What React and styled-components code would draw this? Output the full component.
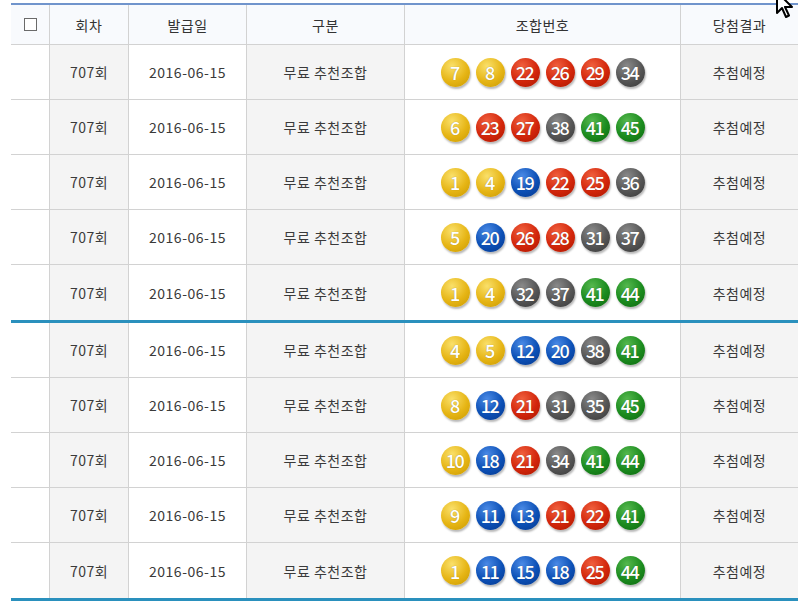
import React from "react";
import styled, { createGlobalStyle } from "styled-components";

const GlobalStyle = createGlobalStyle`
  html, body {
    margin: 0;
    padding: 0;
    background: #ffffff;
  }
  body {
    font-family: "Noto Sans CJK KR", "Noto Sans", sans-serif;
  }
`;

const COLS = "38px 79px 118px 158px 276px 118px";

const Page = styled.div`
  position: relative;
  width: 812px;
  height: 602px;
  overflow: hidden;
  padding: 3px 0 0 11px;
  box-sizing: border-box;
`;

const Table = styled.div`
  width: 787px;
  border-top: 2px solid #7094cc;
`;

const HeadRow = styled.div`
  display: grid;
  grid-template-columns: ${COLS};
  height: 40px;
  background: #f8fafd;
  border-bottom: 1px solid #d2d2d2;
  box-sizing: border-box;
`;

const HeadCell = styled.div`
  display: flex;
  align-items: center;
  justify-content: center;
  font-size: 14px;
  letter-spacing: 0.5px;
  color: #333;
  border-left: ${p => (p.first ? "none" : "1px solid #d2d2d2")};
`;

const CheckBox = styled.span`
  width: 11px;
  height: 11px;
  border: 1px solid #6a6a6a;
  background: #fff;
`;

const Group = styled.div`
  border-bottom: 3px solid #2a90bd;
`;

const Row = styled.div`
  display: grid;
  grid-template-columns: ${COLS};
  height: 55px;
  box-sizing: border-box;
  border-bottom: ${p => (p.last ? "none" : "1px solid #d2d2d2")};
`;

const Cell = styled.div`
  display: flex;
  align-items: center;
  justify-content: center;
  font-size: 14px;
  letter-spacing: 0.5px;
  color: #3a3a3a;
  background: ${p => (p.shade ? "#f4f4f4" : "#ffffff")};
  border-left: ${p => (p.first ? "none" : "1px solid #d2d2d2")};
`;

const Balls = styled.div`
  display: flex;
  gap: 6px;
`;

const BALL_COLORS = {
  yellow: ["#fae06a", "#e6b515", "#c89800"],
  blue: ["#4a8ae6", "#0c50b6", "#07378a"],
  red: ["#f0603e", "#d3260b", "#a81700"],
  gray: ["#8a8a8a", "#555555", "#363636"],
  green: ["#55b84e", "#1b8b1e", "#0d650f"],
};

const ballColor = n => {
  if (n <= 10) return "yellow";
  if (n <= 20) return "blue";
  if (n <= 30) return "red";
  if (n <= 40) return "gray";
  return "green";
};

const Ball = styled.span`
  width: 29px;
  height: 29px;
  border-radius: 50%;
  display: flex;
  align-items: center;
  justify-content: center;
  color: #fff;
  font-size: 18px;
  font-weight: 500;
  letter-spacing: -1.5px;
  text-indent: -1px;
  text-shadow: 0 0 1px rgba(0, 0, 0, 0.35);
  box-shadow: 1px 2px 2px rgba(0, 0, 0, 0.28);
  background: ${p => {
    const [a, b, c] = BALL_COLORS[p.tone];
    return `radial-gradient(circle at 38% 28%, ${a} 0%, ${b} 55%, ${c} 100%)`;
  }};
`;

const Cursor = styled.svg`
  position: absolute;
  left: 776px;
  top: -9px;
`;

const groups = [
  [
    [7, 8, 22, 26, 29, 34],
    [6, 23, 27, 38, 41, 45],
    [1, 4, 19, 22, 25, 36],
    [5, 20, 26, 28, 31, 37],
    [1, 4, 32, 37, 41, 44],
  ],
  [
    [4, 5, 12, 20, 38, 41],
    [8, 12, 21, 31, 35, 45],
    [10, 18, 21, 34, 41, 44],
    [9, 11, 13, 21, 22, 41],
    [1, 11, 15, 18, 25, 44],
  ],
];

export default function App() {
  return (
    <Page>
      <GlobalStyle />
      <Table>
        <HeadRow>
          <HeadCell first>
            <CheckBox />
          </HeadCell>
          <HeadCell>회차</HeadCell>
          <HeadCell>발급일</HeadCell>
          <HeadCell>구분</HeadCell>
          <HeadCell>조합번호</HeadCell>
          <HeadCell>당첨결과</HeadCell>
        </HeadRow>
        {groups.map((rows, gi) => (
          <Group key={gi}>
            {rows.map((nums, ri) => (
              <Row key={ri} last={ri === rows.length - 1}>
                <Cell first />
                <Cell shade>707회</Cell>
                <Cell>2016-06-15</Cell>
                <Cell shade>무료 추천조합</Cell>
                <Cell>
                  <Balls>
                    {nums.map(n => (
                      <Ball key={n} tone={ballColor(n)}>
                        {n}
                      </Ball>
                    ))}
                  </Balls>
                </Cell>
                <Cell shade>추첨예정</Cell>
              </Row>
            ))}
          </Group>
        ))}
      </Table>
      <Cursor width="20" height="30" viewBox="0 0 20 30">
        <path
          d="M1 1 L1 22 L6 17 L10 26 L13 24.5 L9 16 L16 16 Z"
          fill="#fff"
          stroke="#000"
          strokeWidth="2"
          strokeLinejoin="round"
        />
      </Cursor>
    </Page>
  );
}
